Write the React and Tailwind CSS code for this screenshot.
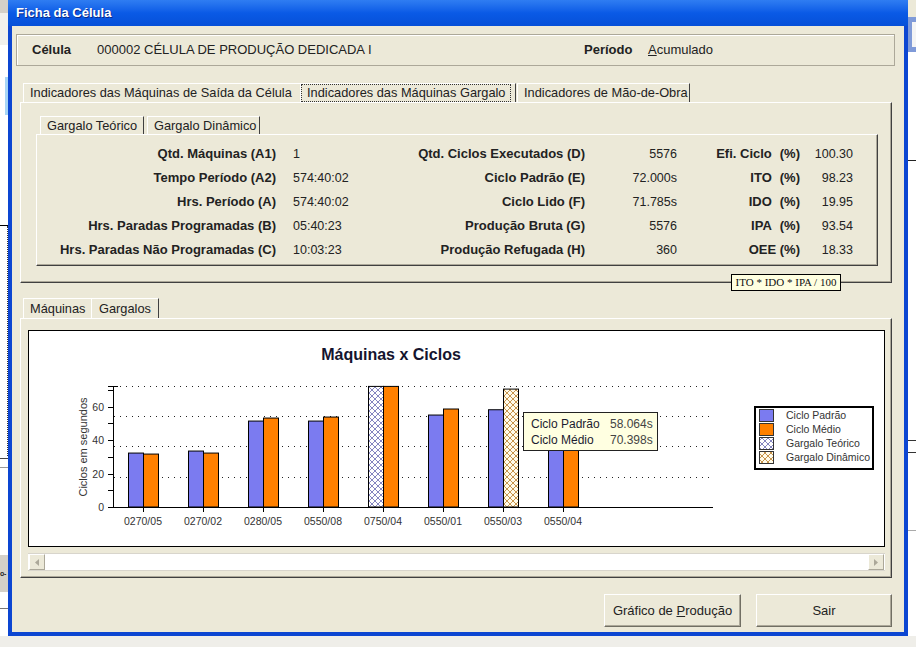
import React from 'react';

const bars = [
  { n: '0270/05', p: 32.2, m: 31.6 },
  { n: '0270/02', p: 33.4, m: 32.2 },
  { n: '0280/05', p: 51.3, m: 53.1 },
  { n: '0550/08', p: 51.3, m: 53.7 },
  { n: '0750/04', p: 72.0, m: 72.0, teorico: true },
  { n: '0550/01', p: 54.9, m: 58.5 },
  { n: '0550/03', p: 58.064, m: 70.398, dinamico: true },
  { n: '0550/04', p: 46, m: 48 },
];

const rows = [
  ['Qtd. Máquinas (A1)', '1', 'Qtd. Ciclos Executados (D)', '5576', 'Efi. Ciclo', '100.30'],
  ['Tempo Período (A2)', '574:40:02', 'Ciclo Padrão (E)', '72.000s', 'ITO', '98.23'],
  ['Hrs. Período (A)', '574:40:02', 'Ciclo Lido (F)', '71.785s', 'IDO', '19.95'],
  ['Hrs. Paradas Programadas (B)', '05:40:23', 'Produção Bruta (G)', '5576', 'IPA', '93.54'],
  ['Hrs. Paradas Não Programadas (C)', '10:03:23', 'Produção Refugada (H)', '360', 'OEE', '18.33'],
];

const Y = (v) => 507 - v * 1.675;

function Backdrop() {
  return (
    <>
      <div className="absolute left-0 top-0 w-[8px] h-[13px] bg-[#d4d0c8]" />
      <div className="absolute left-0 top-[13px] w-[8px] h-[32px] bg-[#f1f0ec]" />
      <div className="absolute left-[5px] top-[77px] w-[3px] h-[38px] bg-[#a8d6f6]" />
      <div className="absolute left-0 top-[225px] w-[8px] h-px bg-black" />
      <div className="absolute left-[7px] top-[226px] h-[230px] w-px border-l border-dotted border-[#333]" />
      <div className="absolute left-0 top-[458px] w-[8px] h-px bg-[#444]" />
      <div className="absolute left-0 top-[467px] w-[8px] h-px bg-[#999]" />
      <div className="absolute left-0 top-[555px] w-[8px] h-[37px] bg-[#d4d0c8] flex items-center text-[7px] font-bold leading-none tracking-tighter">o-</div>
      <div className="absolute left-0 top-[608px] w-[8px] h-px bg-[#777]" />
      <div className="absolute left-[908px] top-0 w-[8px] h-[17px] bg-[#ece9d8]" />
      <div className="absolute left-[908px] top-[17px] w-[8px] h-[35px] bg-[#7f9ad8]" />
      <div className="absolute left-[912px] top-[22px] w-[4px] h-[25px] bg-[#f4f4f4]" />
      <div className="absolute left-[908px] top-[160px] w-[8px] h-px bg-[#222]" />
      <div className="absolute left-[908px] top-[440px] w-[8px] h-px bg-[#333]" />
      <div className="absolute left-[908px] top-[452px] w-[8px] h-px bg-[#333]" />
      <div className="absolute left-[908px] top-[530px] w-[8px] h-px bg-[#aaa]" />
      <div className="absolute left-0 top-[636px] w-[916px] h-[11px] bg-[#efeee9]" />
    </>
  );
}

function Chart() {
  return (
    <div className="relative mt-[11px] ml-[7px] w-[857px] h-[217px] border border-black bg-white">
      <svg width="855" height="215" className="block">
        <defs>
          <pattern id="hatchT" width="6" height="6" patternUnits="userSpaceOnUse">
            <rect width="6" height="6" fill="#fff" />
            <path d="M0 0L6 6M6 0L0 6" stroke="#8585c0" strokeWidth="1" />
          </pattern>
          <pattern id="hatchD" width="6" height="6" patternUnits="userSpaceOnUse">
            <rect width="6" height="6" fill="#fffbea" />
            <path d="M0 0L6 6M6 0L0 6" stroke="#c8944c" strokeWidth="1" />
          </pattern>
        </defs>
        <g transform="translate(-29 -331)" fontFamily="'Liberation Sans', Arial, sans-serif">
          <text x="391" y="360" textAnchor="middle" fontSize="16" fontWeight="bold" fill="#14142e">Máquinas x Ciclos</text>

          {[386.5, 416.5, 446.5, 477.5].map((y) => (
            <line key={y} x1="114" x2="714" y1={y} y2={y} stroke="#222" strokeDasharray="1 5" />
          ))}

          <line x1="113.5" x2="113.5" y1="386" y2="507" stroke="#000" />
          {[0, 10, 20, 30, 40, 50, 60, 70].map((v) => (
            <line key={v} x1="108" x2="113" y1={Math.round(Y(v)) + 0.5} y2={Math.round(Y(v)) + 0.5} stroke="#000" />
          ))}
          <line x1="108" x2="118" y1="386.5" y2="386.5" stroke="#000" />
          {[0, 20, 40, 60].map((v) => (
            <text key={v} x="104" y={Y(v) + 4} textAnchor="end" fontSize="10.5" fill="#333">{v}</text>
          ))}
          <text transform="translate(87 447) rotate(-90)" textAnchor="middle" fontSize="11" fill="#333">Ciclos em segundos</text>

          {bars.map((b, i) => {
            const cx = 143 + i * 60;
            return (
              <g key={b.n}>
                <rect x={cx - 15 + 0.5} y={Y(b.p)} width="15" height={507 - Y(b.p)} fill={b.teorico ? 'url(#hatchT)' : '#7b7bf0'} stroke="#000" />
                <rect x={cx + 0.5} y={Y(b.m)} width="15" height={507 - Y(b.m)} fill={b.dinamico ? 'url(#hatchD)' : '#ff8000'} stroke="#000" />
                <line x1={cx + 0.5} x2={cx + 0.5} y1="507" y2="512" stroke="#000" />
                <text x={cx} y="525" textAnchor="middle" fontSize="10.5" fill="#333">{b.n}</text>
              </g>
            );
          })}
          <line x1="113" x2="713" y1="507.5" y2="507.5" stroke="#000" />

          <rect x="755" y="407" width="118" height="62" fill="#fff" stroke="#000" strokeWidth="2" />
          {[
            ['#7b7bf0', 'Ciclo Padrão'],
            ['#ff8000', 'Ciclo Médio'],
            ['url(#hatchT)', 'Gargalo Teórico'],
            ['url(#hatchD)', 'Gargalo Dinâmico'],
          ].map(([f, t], i) => (
            <g key={t}>
              <rect x="759.5" y={409.5 + i * 14} width="14" height="12" fill={f} stroke="#333" />
              <text x="786" y={419 + i * 14} fontSize="10.5" fill="#333">{t}</text>
            </g>
          ))}
        </g>
      </svg>
      <div className="absolute left-[494px] top-[81px] w-[135px] h-[39px] bg-[#ffffe1] border border-[#222] flex flex-col justify-center pl-[7px] text-[12px] leading-[16px]">
        <div className="flex"><span className="w-[79px] text-[#1c1c30]">Ciclo Padrão</span><span className="text-[#444]">58.064s</span></div>
        <div className="flex"><span className="w-[79px] text-[#1c1c30]">Ciclo Médio</span><span className="text-[#444]">70.398s</span></div>
      </div>
    </div>
  );
}

function ScrollBtn({ left }) {
  return (
    <div className="w-[16px] h-[16px] bg-[#ece9d8] border-t border-l border-white border-r border-b border-r-[#aca899] border-b-[#aca899] flex items-center justify-center">
      <svg width="4" height="7" viewBox="0 0 4 7">
        <path d={left ? 'M4 0L0 3.5L4 7Z' : 'M0 0L4 3.5L0 7Z'} fill="#aca899" />
      </svg>
    </div>
  );
}

function Tab({ w, children, focus, edge = true, h = 'h-[19px]' }) {
  return (
    <div className={`${w} ${h} flex items-center border-t border-l border-white ${edge ? 'border-r border-r-[#404040]' : ''} ${focus ? 'pl-[1px]' : 'pl-[6px]'} text-[12.8px] whitespace-nowrap`}>
      {focus ? <span className="outline-1 outline-dotted outline-[#333] px-[5px] leading-[16px]">{children}</span> : children}
    </div>
  );
}

export default function App() {
  return (
    <div className="relative w-[916px] h-[647px] overflow-hidden bg-white font-['Liberation_Sans',Arial,sans-serif] text-[#222]">
      <Backdrop />
      <div className="absolute left-[8px] top-0 w-[900px] h-[636px] flex flex-col bg-[#0c46d2] border-x-4 border-b-4 border-[#0c46d2]">
        <div className="h-[26px] shrink-0 -mx-[4px] px-[8px] flex items-center bg-gradient-to-b from-[#2f7df2] via-[#0a5ae6] to-[#0650d8]">
          <span className="text-white font-bold text-[13px] [text-shadow:1px_1px_0_#0a2a8a]">Ficha da Célula</span>
        </div>

        <div className="flex-1 flex flex-col bg-[#ece9d8]">
          <div className="mt-[8px] ml-[4px] w-[879px] h-[32px] border border-[#aca899] shadow-[inset_1px_1px_0_#fff] grid grid-cols-[65px_487px_64px_1fr] items-center pl-[15px] text-[13px]">
            <span className="font-bold">Célula</span>
            <span>000002 CÉLULA DE PRODUÇÃO DEDICADA I</span>
            <span className="font-bold">Período</span>
            <span><u>A</u>cumulado</span>
          </div>

          <div className="mt-[17px] ml-[11px] flex">
            <Tab w="w-[277px]" edge={false}>Indicadores das Máquinas de Saída da Célula</Tab>
            <Tab w="w-[216px]" focus>Indicadores das Máquinas Gargalo</Tab>
            <div className="w-[1px]" />
            <Tab w="w-[173px]">Indicadores de Mão-de-Obra</Tab>
          </div>

          <div className="relative ml-[8px] w-[872px] h-[181px] border-t border-l border-white border-r border-b border-r-[#404040] border-b-[#404040] shadow-[inset_-1px_-1px_0_#aca899]">
            <div className="mt-[13px] ml-[19px] flex gap-[3px]">
              <Tab w="w-[104px]" h="h-[18px]">Gargalo Teórico</Tab>
              <Tab w="w-[113px]" h="h-[18px]">Gargalo Dinâmico</Tab>
            </div>
            <div className="ml-[15px] w-[842px] h-[132px] border-t border-l border-white border-r border-b border-r-[#404040] border-b-[#404040] shadow-[inset_-1px_-1px_0_#aca899] pt-[7px]">
              {rows.map((r) => (
                <div key={r[0]} className="grid grid-cols-[239px_92px_217px_92px_123px_53px] h-[24px] items-center text-[12.5px]">
                  <span className="text-right font-bold text-[13px] whitespace-nowrap">{r[0]}</span>
                  <span className="pl-[17px]">{r[1]}</span>
                  <span className="text-right font-bold text-[13px] whitespace-nowrap">{r[2]}</span>
                  <span className="text-right">{r[3]}</span>
                  <span className="text-right font-bold text-[13px] whitespace-nowrap">
                    {r[4] === 'OEE' ? 'OEE (%)' : (<>{r[4]}<span className="ml-[8px]">(%)</span></>)}
                  </span>
                  <span className="text-right">{r[5]}</span>
                </div>
              ))}
            </div>
            <div className="absolute left-[710px] top-[171px] w-[110px] h-[17px] bg-[#ffffe1] border border-black flex items-center justify-center font-['Liberation_Serif',serif] text-[11px] text-[#111] whitespace-nowrap">
              ITO * IDO * IPA / 100
            </div>
          </div>

          <div className="mt-[15px] ml-[11px] flex">
            <Tab w="w-[68px]" h="h-[20px]" edge={false}>Máquinas</Tab>
            <div className="w-[68px] h-[20px] flex items-center border-t border-l border-white border-r border-r-[#404040] pl-[7px] text-[12.8px]">Gargalos</div>
          </div>

          <div className="ml-[8px] w-[872px] h-[260px] border-t border-l border-white border-r border-b border-r-[#404040] border-b-[#404040] shadow-[inset_-1px_-1px_0_#aca899]">
            <Chart />
            <div className="mt-[6px] ml-[7px] w-[857px] h-[18px] flex items-center bg-white border-t border-b border-[#d8d5cc] px-[1px]">
              <ScrollBtn left />
              <div className="flex-1" />
              <ScrollBtn />
            </div>
          </div>

          <div className="mt-[16px] flex justify-end gap-[15px] pr-[12px]">
            <button className="w-[137px] h-[33px] bg-[#ece9d8] border-t border-l border-white border-r border-b border-r-[#716f64] border-b-[#716f64] shadow-[inset_-1px_-1px_0_#aca899] text-[13px] text-[#222]">
              Gráfico de <u>P</u>rodução
            </button>
            <button className="w-[136px] h-[33px] bg-[#ece9d8] border-t border-l border-white border-r border-b border-r-[#716f64] border-b-[#716f64] shadow-[inset_-1px_-1px_0_#aca899] text-[13px] text-[#222]">
              Sair
            </button>
          </div>
        </div>
      </div>
    </div>
  );
}
